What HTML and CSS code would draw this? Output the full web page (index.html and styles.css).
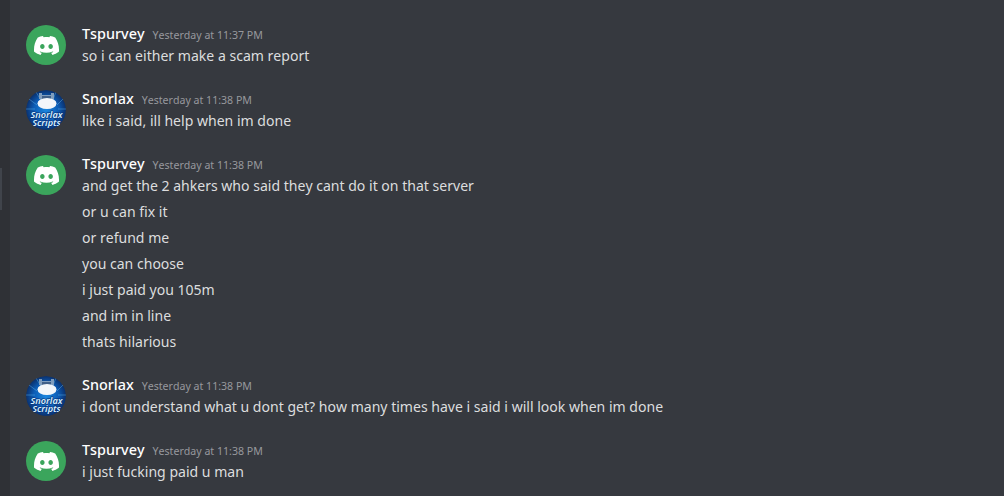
FILE: index.html
```html
<!DOCTYPE html>
<html lang="en">
<head>
<meta charset="utf-8">
<title>Chat</title>
<link rel="stylesheet" href="styles.css">
</head>
<body>
<svg class="defs" width="0" height="0">
  <defs>
    <radialGradient id="blue" cx="50%" cy="50%" r="52%">
      <stop offset="0" stop-color="#1a86de"/>
      <stop offset="0.6" stop-color="#0c5cb5"/>
      <stop offset="1" stop-color="#0a2c66"/>
    </radialGradient>
    <symbol id="discord" viewBox="0 0 24 24">
      <path d="M20.317 4.3698a19.7913 19.7913 0 00-4.8851-1.5152.0741.0741 0 00-.0785.0371c-.211.3753-.4447.8648-.6083 1.2495-1.8447-.2762-3.68-.2762-5.4868 0-.1636-.3933-.4058-.8742-.6177-1.2495a.077.077 0 00-.0785-.037 19.7363 19.7363 0 00-4.8852 1.515.0699.0699 0 00-.0321.0277C.5334 9.0458-.319 13.5799.0992 18.0578a.0824.0824 0 00.0312.0561c2.0528 1.5076 4.0413 2.4228 5.9929 3.0294a.0777.0777 0 00.0842-.0276c.4616-.6304.8731-1.2952 1.226-1.9942a.076.076 0 00-.0416-.1057c-.6528-.2476-1.2743-.5495-1.8722-.8923a.077.077 0 01-.0076-.1277c.1258-.0943.2517-.1923.3718-.2914a.0743.0743 0 01.0776-.0105c3.9278 1.7933 8.18 1.7933 12.0614 0a.0739.0739 0 01.0785.0095c.1202.099.246.1981.3728.2924a.077.077 0 01-.0066.1276 12.2986 12.2986 0 01-1.873.8914.0766.0766 0 00-.0407.1067c.3604.698.7719 1.3628 1.225 1.9932a.076.076 0 00.0842.0286c1.961-.6067 3.9495-1.5219 6.0023-3.0294a.077.077 0 00.0313-.0552c.5004-5.177-.8382-9.6739-3.5485-13.6604a.061.061 0 00-.0312-.0286zM8.02 15.3312c-1.1825 0-2.1569-1.0857-2.1569-2.419 0-1.3332.9555-2.4189 2.157-2.4189 1.2108 0 2.1757 1.0952 2.1568 2.419 0 1.3332-.9555 2.4189-2.1569 2.4189zm7.9748 0c-1.1825 0-2.1569-1.0857-2.1569-2.419 0-1.3332.9554-2.4189 2.1569-2.4189 1.2108 0 2.1757 1.0952 2.1568 2.419 0 1.3332-.946 2.4189-2.1568 2.4189Z"/>
    </symbol>
    <symbol id="snorlax" viewBox="0 0 40 40">
      <circle cx="20" cy="20" r="20" fill="url(#blue)"/>
      <path class="rays" d="M10 2 16 12M30 2 26 12M3 9 11 15M37 9 31 15M0 19 9 19M40 19 32 19"/>
      <path class="ears" d="M13 3h3v2h9V3h3v6H13z"/>
      <path class="face" d="M16 6h9v3H16z"/>
      <ellipse class="belly" cx="21" cy="13.5" rx="9.5" ry="5.5"/>
      <text class="logo" x="20.5" y="27.5">Snorlax</text>
      <text class="logo" x="20.5" y="36">Scripts</text>
    </symbol>
  </defs>
</svg>
<aside class="rail"><div class="thumb"></div></aside>
<main class="chat">
  <article class="group">
    <div class="avatar green"><svg class="glyph"><use href="#discord"/></svg></div>
    <div class="body">
      <div class="head"><span class="name">Tspurvey</span><time class="stamp">Yesterday at 11:37 PM</time></div>
      <p class="line">so i can either make a scam report</p>
    </div>
  </article>
  <article class="group">
    <div class="avatar"><svg class="picture"><use href="#snorlax"/></svg></div>
    <div class="body">
      <div class="head"><span class="name">Snorlax</span><time class="stamp">Yesterday at 11:38 PM</time></div>
      <p class="line">like i said, ill help when im done</p>
    </div>
  </article>
  <article class="group">
    <div class="avatar green"><svg class="glyph"><use href="#discord"/></svg></div>
    <div class="body">
      <div class="head"><span class="name">Tspurvey</span><time class="stamp">Yesterday at 11:38 PM</time></div>
      <p class="line">and get the 2 ahkers who said they cant do it on that server</p>
      <p class="line">or u can fix it</p>
      <p class="line">or refund me</p>
      <p class="line">you can choose</p>
      <p class="line">i just paid you 105m</p>
      <p class="line">and im in line</p>
      <p class="line">thats hilarious</p>
    </div>
  </article>
  <article class="group">
    <div class="avatar"><svg class="picture"><use href="#snorlax"/></svg></div>
    <div class="body">
      <div class="head"><span class="name">Snorlax</span><time class="stamp">Yesterday at 11:38 PM</time></div>
      <p class="line">i dont understand what u dont get? how many times have i said i will look when im done</p>
    </div>
  </article>
  <article class="group">
    <div class="avatar green"><svg class="glyph"><use href="#discord"/></svg></div>
    <div class="body">
      <div class="head"><span class="name">Tspurvey</span><time class="stamp">Yesterday at 11:38 PM</time></div>
      <p class="line">i just fucking paid u man</p>
    </div>
  </article>
</main>
</body>
</html>
```
FILE: styles.css
```css
* { box-sizing: border-box; }
html, body { margin: 0; height: 100%; }
body {
  display: flex;
  height: 496px;
  overflow: hidden;
  background: #36393f;
  font-family: "Noto Sans", "Open Sans", sans-serif;
  font-kerning: none;
  color: #dcddde;
}
.defs { display: block; width: 0; height: 0; }
.rail {
  flex: 0 0 10px;
  background: #2f3136;
  padding-top: 168px;
}
.thumb {
  width: 2px;
  height: 42px;
  background: #40444b;
}
.chat {
  flex: 1;
  display: flex;
  flex-direction: column;
  gap: 21px;
  padding: 23px 0 0 16px;
}
.group { display: flex; gap: 16px; }
.avatar {
  flex: none;
  width: 40px;
  height: 40px;
  margin-top: 2px;
  border-radius: 50%;
  display: flex;
  align-items: center;
  justify-content: center;
  overflow: hidden;
}
.green { background: #3ba55c; }
.glyph { width: 25px; height: 25px; fill: #fff; }
.picture { width: 40px; height: 40px; }
.rays { stroke: #6cc4f5; stroke-width: 1; opacity: .4; fill: none; }
.ears { fill: #7f9dbd; }
.belly { fill: #f2f6fa; }
.face { fill: #3f5f88; }
.logo {
  font-family: "Noto Sans", sans-serif;
  font-size: 9.2px;
  font-style: italic;
  font-weight: 600;
  text-anchor: middle;
  fill: #d4f1ff;
  stroke: #0a2f78;
  stroke-width: 1.2px;
  paint-order: stroke;
}
.body { display: flex; flex-direction: column; gap: 4px; }
.head {
  display: flex;
  align-items: baseline;
  gap: 8px;
  height: 22px;
  line-height: 22px;
  margin-bottom: -4px;
}
.name { font-size: 14.4px; font-weight: 500; color: #fff; }
.stamp { font-size: 10.6px; color: #96989d; }
.line { margin: 0; font-size: 14.05px; line-height: 22px; white-space: nowrap; }
```
